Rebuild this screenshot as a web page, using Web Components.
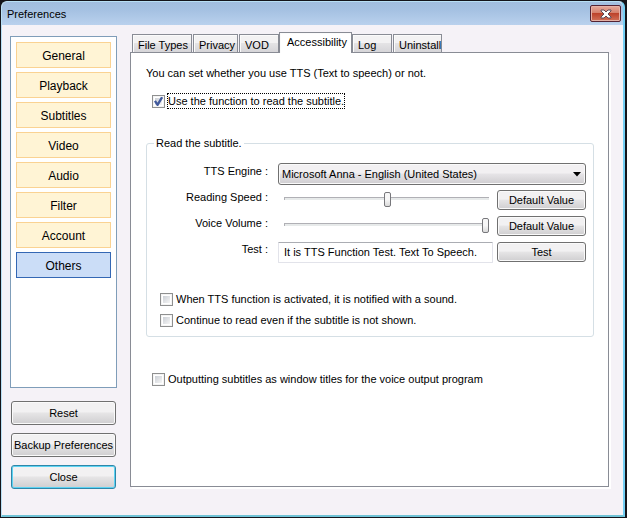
<!DOCTYPE html>
<html lang="en">
<head>
<meta charset="utf-8">
<title>Preferences</title>
<style>
html, body { height: 100%; }
body { margin: 0; background: #14141a; color: #000; font: 11px/16px "Liberation Sans", Arial, sans-serif; }
</style>
</head>
<body>
<pref-window></pref-window>
<script>
const define = (name, html, setup) => {
  const template = document.createElement('template');
  template.innerHTML = html;
  customElements.define(name, class extends HTMLElement {
    constructor() {
      super();
      this.attachShadow({ mode: 'open' }).append(template.content.cloneNode(true));
    }
    connectedCallback() { if (setup) setup(this, this.shadowRoot); }
  });
};

define('pref-button', `
<style>
:host { display: block; }
button { display: block; box-sizing: border-box; width: 100%; height: var(--button-height, 20px); padding: 0; border: 1px solid #707070; border-radius: 3px; font: inherit; color: #000; white-space: nowrap;
  background: linear-gradient(#f2f1f2 0 45%, #e6e5e6 50%, #cfced0); box-shadow: inset 0 0 0 1px #fafafa; }
:host([default]) button { border-color: #2f86a8; box-shadow: inset 0 0 0 1px #5cd3f3; }
</style>
<button type="button"><slot></slot></button>`);

define('pref-category', `
<style>
:host { display: block; }
button { display: block; box-sizing: border-box; width: 100%; height: 26px; padding: 2px 0 0; border: 1px solid #fad292; background: #fff4d5; font: inherit; font-size: 12px; color: #000; }
:host([current]) button { border-color: #3467b4; background: #cbddf7; }
</style>
<button type="button"><slot></slot></button>`);

define('pref-check', `
<style>
:host { display: block; }
label { display: flex; align-items: center; gap: 2px; height: 16px; }
input { appearance: none; flex: none; box-sizing: border-box; width: 13px; height: 13px; margin: 0; border: 1px solid #8e8f8f; background: linear-gradient(135deg, #cbcfd5, #f6f6f6) content-box; padding: 2px; box-shadow: inset 0 0 0 1px #f4f4f4; }
input:checked { background: url("data:image/svg+xml,%3Csvg xmlns='http://www.w3.org/2000/svg' viewBox='0 0 11 11'%3E%3Cpath d='M2.5 5 4.7 8.3 8.6 1.8' fill='none' stroke='%23425a9c' stroke-width='2'/%3E%3C/svg%3E") border-box, linear-gradient(135deg, #cbcfd5, #f6f6f6) content-box; }
span { border: 1px dotted transparent; line-height: 14px; white-space: nowrap; }
:host([focused]) span { border-color: #000; }
</style>
<label><input type="checkbox"><span><slot></slot></span></label>`,
(host, root) => { root.querySelector('input').checked = host.hasAttribute('checked'); });

define('pref-tab', `
<style>
:host { display: block; }
button { display: block; box-sizing: border-box; width: 100%; height: 18px; padding: 2px 0 0 5px; border: 1px solid #898c95; border-bottom: 0; background: linear-gradient(#f3f2f3 0 45%, #e4e3e5 50%, #d6d5d8); box-shadow: inset 1px 1px #fbfbfb; font: inherit; text-align: left; white-space: nowrap; color: #000; }
:host([current]) button { height: 21px; margin-bottom: -1px; padding: 0 0 2px 7px; background: #fff; position: relative; }
</style>
<button type="button" role="tab"><slot></slot></button>`,
(host, root) => root.querySelector('button').setAttribute('aria-selected', host.hasAttribute('current')));

define('pref-speech', `
<style>
:host { display: block; }
fieldset { margin: 0; padding: 10px 7px 8px 12px; border: 1px solid #d5dfe5; border-radius: 3px; min-width: 0; }
legend { margin-left: -5px; padding: 0 2px; line-height: 16px; }
.rows { display: grid; grid-template-columns: 109px minmax(0, 1fr) 89px; column-gap: 4px; }
.row { display: grid; grid-column: 1 / -1; grid-template-columns: subgrid; height: 26px; align-items: center; }
.row > label { text-align: right; padding: 0 0 6px; }
.field { margin-left: 6px; }
.engine { grid-column: 2 / -1; position: relative; display: flex; align-items: center; }
select { appearance: none; box-sizing: border-box; width: 100%; height: 22px; border: 1px solid #707070; border-radius: 3px; padding: 0 20px 0 3px; background: linear-gradient(#f2f0f2 0 45%, #e6e4e7 50%, #cfcdd0); box-shadow: inset 0 0 0 1px #fafafa; font: inherit; color: #000; }
.engine svg { position: absolute; right: 5px; top: 9px; pointer-events: none; }
input[type=text] { display: block; box-sizing: border-box; width: 100%; height: 21px; border: 1px solid #e2e3ea; border-top-color: #abadb3; border-radius: 1px; padding: 0 5px; font: inherit; color: #000; }
input[type=range] { appearance: none; height: 15px; margin: 0 4px 4px 12px; padding: 0; background: none; min-width: 0; }
input::-webkit-slider-runnable-track { height: 3px; background: #e7eaea; border-top: 1px solid #b0b0b5; border-left: 1px solid #b0b0b5; box-sizing: border-box; }
input::-webkit-slider-thumb { appearance: none; box-sizing: border-box; width: 7px; height: 15px; margin-top: -6px; border: 1px solid #77777b; border-radius: 2px; background: linear-gradient(#f7f7f7 50%, #dadada); }
.checks { display: grid; gap: 5px; margin: 26px 0 0 1px; }
</style>
<fieldset>
  <legend>Read the subtitle.</legend>
  <div class="rows">
    <div class="row"><label for="engine">TTS Engine :</label><div class="field engine"><select id="engine"><option>Microsoft Anna - English (United States)</option></select><svg width="8" height="5" viewBox="0 0 8 5" aria-hidden="true"><path d="M0 0h8L4 4.5z"/></svg></div></div>
    <div class="row"><label for="speed">Reading Speed :</label><input id="speed" type="range" value="50"><pref-button>Default Value</pref-button></div>
    <div class="row"><label for="volume">Voice Volume :</label><input id="volume" type="range" value="100"><pref-button>Default Value</pref-button></div>
    <div class="row"><label for="test">Test :</label><div class="field"><input id="test" type="text" value="It is TTS Function Test. Text To Speech."></div><pref-button>Test</pref-button></div>
  </div>
  <div class="checks">
    <pref-check>When TTS function is activated, it is notified with a sound.</pref-check>
    <pref-check>Continue to read even if the subtitle is not shown.</pref-check>
  </div>
</fieldset>`);

define('pref-window', `
<style>
:host { display: flex; flex-direction: column; box-sizing: border-box; min-height: 100%; padding: 1px 2px 1px 1px; background: #14141a; }
.window { flex: 1; display: flex; flex-direction: column; border: 1px solid #b8dff4; border-right: 2px solid #74cff4; border-bottom: 2px solid #6fc3d6; border-radius: 6px 6px 0 0; background: #f5f2f7; }
header { display: flex; align-items: flex-start; justify-content: space-between; height: 23px; padding: 0 2px 0 5px; border-radius: 5px 5px 0 0; background: linear-gradient(#a1bddf, #a5c1e2 35%, #b9d1ed); }
h1 { margin: 0; padding-top: 4px; font: inherit; }
.x { display: flex; align-items: center; justify-content: center; box-sizing: border-box; width: 31px; height: 17px; margin-top: 3px; padding: 0; border: 1px solid #532233; border-radius: 2px; background: linear-gradient(#e6a99c, #d5806c 45%, #bd422b 50%, #d17159); box-shadow: inset 0 0 0 1px #e5b0a5; }
main { flex: 1; display: grid; grid-template-columns: 107px minmax(0, 1fr); gap: 13px; padding: 7px 14px 28px 8px; }
aside { display: flex; flex-direction: column; margin-bottom: -2px; --button-height: 24px; }
nav { flex: 1; display: flex; flex-direction: column; gap: 4px; box-sizing: border-box; padding: 5px; border: 1px solid #7f9db9; background: #fff; margin: 4px 0 13px; }
.actions { display: grid; grid-template-columns: minmax(0, 1fr); gap: 8px; padding: 0 1px; }
section { display: flex; flex-direction: column; min-width: 0; }
.tabs { display: flex; align-items: flex-end; gap: 1px; padding-left: 2px; }
.types { width: 60px; } .privacy { width: 45px; } .vod { width: 40px; } .access { width: 73px; margin: 0 -1px; } .log { width: 40px; } .uninstall { width: 49px; }
.panel { flex: 1; border: 1px solid #898c95; background: #fff; box-shadow: 2px 2px #fff; padding: 12px 14px 0 15px; }
p { margin: 0 0 12px; }
.indent { margin-left: 6px; }
pref-speech { margin: 26px 0 34px; }
</style>
<div class="window">
  <header><h1>Preferences</h1>
    <button class="x" type="button" aria-label="Close window"><svg width="12" height="10" viewBox="0 0 12 10"><path d="M1 1h3l2 2 2-2h3v1L8 5l3 3v1H8L6 7 4 9H1V8l3-3-3-3z" fill="#fff" stroke="#5f4a56"/></svg></button>
  </header>
  <main>
    <aside>
      <nav aria-label="Categories">
        <pref-category>General</pref-category><pref-category>Playback</pref-category><pref-category>Subtitles</pref-category><pref-category>Video</pref-category><pref-category>Audio</pref-category><pref-category>Filter</pref-category><pref-category>Account</pref-category><pref-category current>Others</pref-category>
      </nav>
      <div class="actions"><pref-button>Reset</pref-button><pref-button>Backup Preferences</pref-button><pref-button default>Close</pref-button></div>
    </aside>
    <section>
      <div class="tabs" role="tablist">
        <pref-tab class="types">File Types</pref-tab><pref-tab class="privacy">Privacy</pref-tab><pref-tab class="vod">VOD</pref-tab><pref-tab class="access" current>Accessibility</pref-tab><pref-tab class="log">Log</pref-tab><pref-tab class="uninstall">Uninstall</pref-tab>
      </div>
      <div class="panel" role="tabpanel">
        <p>You can set whether you use TTS (Text to speech) or not.</p>
        <pref-check class="indent" checked focused>Use the function to read the subtitle.</pref-check>
        <pref-speech></pref-speech>
        <pref-check class="indent">Outputting subtitles as window titles for the voice output program</pref-check>
      </div>
    </section>
  </main>
</div>`);
</script>
</body>
</html>
